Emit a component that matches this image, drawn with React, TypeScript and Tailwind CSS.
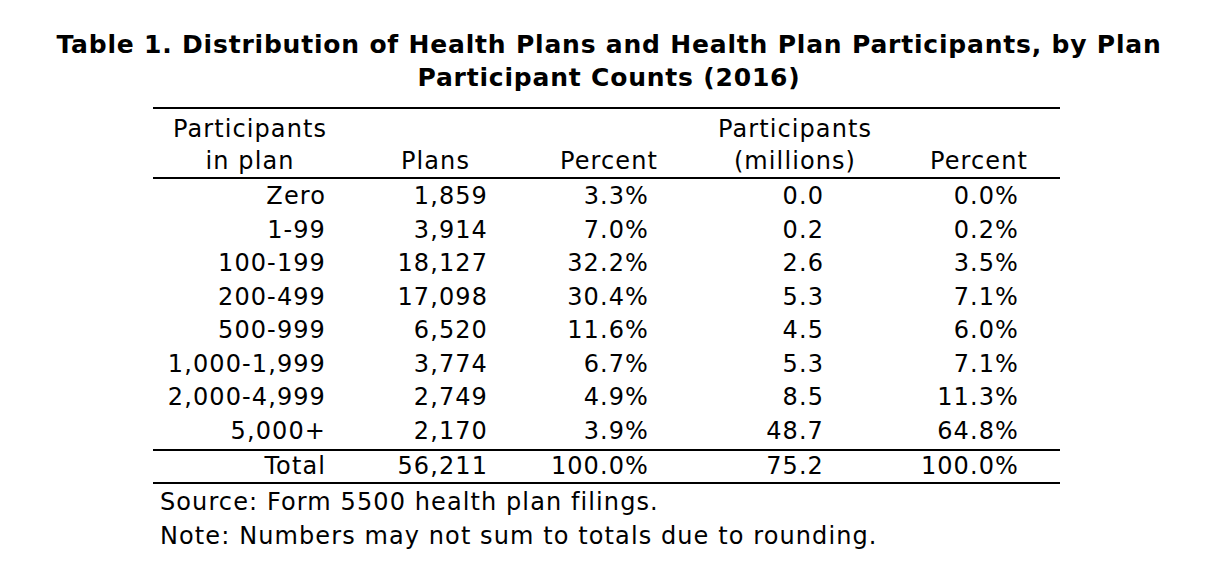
const ROWS: [string, string, string, string, string][] = [
  ["Zero", "1,859", "3.3%", "0.0", "0.0%"],
  ["1-99", "3,914", "7.0%", "0.2", "0.2%"],
  ["100-199", "18,127", "32.2%", "2.6", "3.5%"],
  ["200-499", "17,098", "30.4%", "5.3", "7.1%"],
  ["500-999", "6,520", "11.6%", "4.5", "6.0%"],
  ["1,000-1,999", "3,774", "6.7%", "5.3", "7.1%"],
  ["2,000-4,999", "2,749", "4.9%", "8.5", "11.3%"],
  ["5,000+", "2,170", "3.9%", "48.7", "64.8%"],
];

const GRID = "grid grid-cols-[182px_162px_161px_180px_222px]";

function Row({ cells, className }: { cells: string[]; className: string }) {
  return (
    <div className={`${GRID} ${className}`}>
      <div className="pr-[9px] text-right">{cells[0]}</div>
      <div className="pr-[9px] text-right">{cells[1]}</div>
      <div className="pr-[9px] text-right">{cells[2]}</div>
      <div className="pr-[14px] text-right">{cells[3]}</div>
      <div className="pr-[41px] text-right">{cells[4]}</div>
    </div>
  );
}

export default function App() {
  return (
    <div
      className="h-[588px] w-[1218px] bg-white text-black"
      style={{ fontFamily: "'DejaVu Sans', Verdana, sans-serif" }}
    >
      <h1 className="pt-[28px] text-center text-[25px] font-bold leading-[33px] tracking-[0.8px]">
        Table 1. Distribution of Health Plans and Health Plan Participants, by Plan
        <br />
        Participant Counts (2016)
      </h1>

      <div className="ml-[153px] mt-[13px] w-[907px] text-[24px] tracking-[1.1px]">
        <div className="h-[2px] bg-black" />
        <div className={`${GRID} h-[68px] leading-[32px] pt-[4px]`}>
          <div className="pl-[12px] text-center">
            Participants
            <br />
            in plan
          </div>
          <div className="flex items-end justify-end pr-[27px]">Plans</div>
          <div className="flex items-end justify-end">Percent</div>
          <div className="-mr-[47px] pl-[47px] text-center">
            Participants
            <br />
            (millions)
          </div>
          <div className="flex items-end justify-end pr-[32px]">Percent</div>
        </div>
        <div className="h-[2px] bg-black" />
        <div className="py-[1px]">
          {ROWS.map((r) => (
            <Row key={r[0]} cells={r} className="h-[33.5px] leading-[33.5px]" />
          ))}
        </div>
        <div className="h-[2px] bg-black" />
        <Row
          cells={["Total", "56,211", "100.0%", "75.2", "100.0%"]}
          className="h-[31px] leading-[31px]"
        />
        <div className="h-[2px] bg-black" />
        <div className="pl-[7px] pt-[1px] leading-[34px]">
          <p>Source: Form 5500 health plan filings.</p>
          <p>Note: Numbers may not sum to totals due to rounding.</p>
        </div>
      </div>
    </div>
  );
}
